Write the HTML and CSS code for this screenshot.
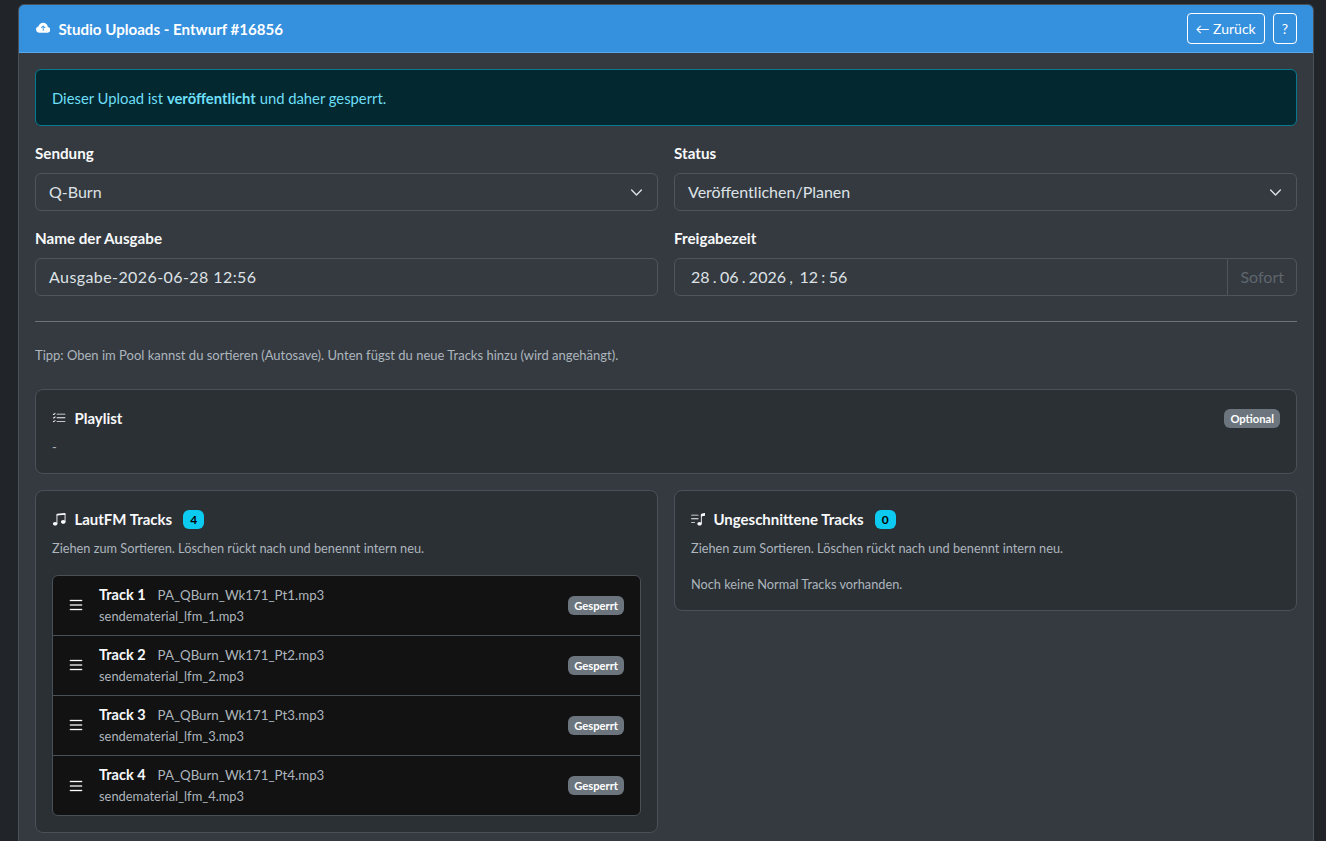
FILE: index.html
```html
<!DOCTYPE html>
<html lang="de">

<head>
  <title>Studio Uploads</title>
  <link rel="stylesheet" href="styles.css">
</head>

<body>
  <div class="main-card">
    <div class="main-header">
      <div class="main-title">
        <svg class="icon" viewBox="0 0 16 16"><path d="M8 2a5.53 5.53 0 0 0-3.594 1.342c-.766.66-1.321 1.52-1.464 2.383C1.266 6.095 0 7.555 0 9.318 0 11.366 1.708 13 3.781 13h8.906C14.502 13 16 11.57 16 9.773c0-1.636-1.242-2.969-2.834-3.194C12.923 3.999 10.69 2 8 2zm2.354 5.146a.5.5 0 0 1-.708.708L8.5 6.707V10.5a.5.5 0 0 1-1 0V6.707L6.354 7.854a.5.5 0 1 1-.708-.708l2-2a.5.5 0 0 1 .708 0l2 2z"/></svg>
        <span>Studio Uploads - Entwurf #16856</span>
      </div>
      <div class="header-btns">
        <a class="btn-outline" href="#">← Zurück</a>
        <a class="btn-outline" href="#">?</a>
      </div>
    </div>

    <div class="main-body">
      <div class="alert"><span>Dieser Upload ist <b>veröffentlicht</b> und daher gesperrt.</span></div>

      <div class="form-grid">
        <div class="field">
          <label>Sendung</label>
          <div class="control select">
            <span>Q-Burn</span>
            <svg class="chevron" viewBox="0 0 16 16"><path fill="none" stroke="currentColor" stroke-linecap="round" stroke-linejoin="round" stroke-width="1.7" d="m2 5 6 6 6-6"/></svg>
          </div>
        </div>
        <div class="field">
          <label>Status</label>
          <div class="control select">
            <span>Veröffentlichen/Planen</span>
            <svg class="chevron" viewBox="0 0 16 16"><path fill="none" stroke="currentColor" stroke-linecap="round" stroke-linejoin="round" stroke-width="1.7" d="m2 5 6 6 6-6"/></svg>
          </div>
        </div>
        <div class="field">
          <label>Name der Ausgabe</label>
          <div class="control wide">Ausgabe-2026-06-28 12:56</div>
        </div>
        <div class="field">
          <label>Freigabezeit</label>
          <div class="input-group">
            <div class="control date">28 . 06 . 2026 , &nbsp;12 : 56</div>
            <div class="addon">Sofort</div>
          </div>
        </div>
      </div>

      <hr class="divider">

      <p class="tip">Tipp: Oben im Pool kannst du sortieren (Autosave). Unten fügst du neue Tracks hinzu (wird angehängt).</p>

      <div class="panel playlist">
        <div class="panel-head">
          <div class="panel-title">
            <svg class="icon" viewBox="0 0 16 16"><path d="M5 11.5a.5.5 0 0 1 .5-.5h9a.5.5 0 0 1 0 1h-9a.5.5 0 0 1-.5-.5zm0-4a.5.5 0 0 1 .5-.5h9a.5.5 0 0 1 0 1h-9a.5.5 0 0 1-.5-.5zm0-4a.5.5 0 0 1 .5-.5h9a.5.5 0 0 1 0 1h-9a.5.5 0 0 1-.5-.5zM3.854 2.146a.5.5 0 0 1 0 .708l-1.5 1.5a.5.5 0 0 1-.708 0l-.5-.5a.5.5 0 1 1 .708-.708L2 3.293l1.146-1.147a.5.5 0 0 1 .708 0zm0 4a.5.5 0 0 1 0 .708l-1.5 1.5a.5.5 0 0 1-.708 0l-.5-.5a.5.5 0 1 1 .708-.708L2 7.293l1.146-1.147a.5.5 0 0 1 .708 0zm0 4a.5.5 0 0 1 0 .708l-1.5 1.5a.5.5 0 0 1-.708 0l-.5-.5a.5.5 0 0 1 .708-.708l.146.147 1.146-1.147a.5.5 0 0 1 .708 0z"/></svg>
            <span>Playlist</span>
          </div>
          <span class="badge grey">Optional</span>
        </div>
        <div class="muted dash">-</div>
      </div>

      <div class="track-grid">
        <div class="panel">
          <div class="panel-title">
            <svg class="icon" viewBox="0 0 16 16"><path d="M6 13c0 1.105-1.12 2-2.5 2S1 14.105 1 13c0-1.104 1.12-2 2.5-2s2.5.896 2.5 2zm9-2c0 1.105-1.12 2-2.5 2s-2.5-.895-2.5-2 1.12-2 2.5-2 2.5.895 2.5 2z"/><path d="M14 11V2h1v9h-1zM6 3v10H5V3h1z"/><path d="M5 2.905a1 1 0 0 1 .9-.995l8-.8a1 1 0 0 1 1.1.995V3L5 4V2.905z"/></svg>
            <span>LautFM Tracks</span>
            <span class="badge cyan">4</span>
          </div>
          <div class="muted hint">Ziehen zum Sortieren. Löschen rückt nach und benennt intern neu.</div>

          <div class="track-list">
            <div class="track">
              <svg class="handle" viewBox="0 0 16 16"><path d="M2.5 12a.5.5 0 0 1 .5-.5h10a.5.5 0 0 1 0 1H3a.5.5 0 0 1-.5-.5zm0-4a.5.5 0 0 1 .5-.5h10a.5.5 0 0 1 0 1H3a.5.5 0 0 1-.5-.5zm0-4a.5.5 0 0 1 .5-.5h10a.5.5 0 0 1 0 1H3a.5.5 0 0 1-.5-.5z"/></svg>
              <div class="track-text">
                <div class="track-line"><b>Track 1</b><span>PA_QBurn_Wk171_Pt1.mp3</span></div>
                <div class="track-file">sendematerial_lfm_1.mp3</div>
              </div>
              <span class="badge grey">Gesperrt</span>
            </div>
            <div class="track">
              <svg class="handle" viewBox="0 0 16 16"><path d="M2.5 12a.5.5 0 0 1 .5-.5h10a.5.5 0 0 1 0 1H3a.5.5 0 0 1-.5-.5zm0-4a.5.5 0 0 1 .5-.5h10a.5.5 0 0 1 0 1H3a.5.5 0 0 1-.5-.5zm0-4a.5.5 0 0 1 .5-.5h10a.5.5 0 0 1 0 1H3a.5.5 0 0 1-.5-.5z"/></svg>
              <div class="track-text">
                <div class="track-line"><b>Track 2</b><span>PA_QBurn_Wk171_Pt2.mp3</span></div>
                <div class="track-file">sendematerial_lfm_2.mp3</div>
              </div>
              <span class="badge grey">Gesperrt</span>
            </div>
            <div class="track">
              <svg class="handle" viewBox="0 0 16 16"><path d="M2.5 12a.5.5 0 0 1 .5-.5h10a.5.5 0 0 1 0 1H3a.5.5 0 0 1-.5-.5zm0-4a.5.5 0 0 1 .5-.5h10a.5.5 0 0 1 0 1H3a.5.5 0 0 1-.5-.5zm0-4a.5.5 0 0 1 .5-.5h10a.5.5 0 0 1 0 1H3a.5.5 0 0 1-.5-.5z"/></svg>
              <div class="track-text">
                <div class="track-line"><b>Track 3</b><span>PA_QBurn_Wk171_Pt3.mp3</span></div>
                <div class="track-file">sendematerial_lfm_3.mp3</div>
              </div>
              <span class="badge grey">Gesperrt</span>
            </div>
            <div class="track">
              <svg class="handle" viewBox="0 0 16 16"><path d="M2.5 12a.5.5 0 0 1 .5-.5h10a.5.5 0 0 1 0 1H3a.5.5 0 0 1-.5-.5zm0-4a.5.5 0 0 1 .5-.5h10a.5.5 0 0 1 0 1H3a.5.5 0 0 1-.5-.5zm0-4a.5.5 0 0 1 .5-.5h10a.5.5 0 0 1 0 1H3a.5.5 0 0 1-.5-.5z"/></svg>
              <div class="track-text">
                <div class="track-line"><b>Track 4</b><span>PA_QBurn_Wk171_Pt4.mp3</span></div>
                <div class="track-file">sendematerial_lfm_4.mp3</div>
              </div>
              <span class="badge grey">Gesperrt</span>
            </div>
          </div>
        </div>

        <div class="panel side">
          <div class="panel-title">
            <svg class="icon" viewBox="0 0 16 16"><path d="M12 13c0 1.105-1.12 2-2.5 2S7 14.105 7 13s1.12-2 2.5-2 2.5.895 2.5 2z"/><path d="M12 3v10h-1V3h1z"/><path d="M11 2.82a1 1 0 0 1 .804-.98l3-.6A1 1 0 0 1 16 2.22V4l-5 1V2.82z"/><path d="M0 11.5a.5.5 0 0 1 .5-.5H4a.5.5 0 0 1 0 1H.5a.5.5 0 0 1-.5-.5zm0-4A.5.5 0 0 1 .5 7H8a.5.5 0 0 1 0 1H.5a.5.5 0 0 1-.5-.5zm0-4A.5.5 0 0 1 .5 3H8a.5.5 0 0 1 0 1H.5a.5.5 0 0 1-.5-.5z"/></svg>
            <span>Ungeschnittene Tracks</span>
            <span class="badge cyan">0</span>
          </div>
          <div class="muted hint">Ziehen zum Sortieren. Löschen rückt nach und benennt intern neu.</div>
          <div class="muted empty">Noch keine Normal Tracks vorhanden.</div>
        </div>
      </div>
    </div>
  </div>
</body>

</html>
```

FILE: styles.css
```css
html,
body {
  height: 841px;
  overflow: hidden;
}

body {
  margin: 0;
  padding: 4px 12px 0 18px;
  background-color: #212529;
  color: #dee2e6;
  font-family: "Lato", "Liberation Sans", sans-serif;
  font-size: 14px;
}

.main-card {
  background-color: #343a40;
  border: 1px solid #495057;
  border-radius: 6px;
  overflow: hidden;
}

.main-header {
  display: flex;
  align-items: center;
  justify-content: space-between;
  height: 48px;
  padding: 0 16px 0 17px;
  background-color: #3590de;
  border-bottom: 1px solid #5aa9ea;
  box-sizing: border-box;
  color: #fff;
}

.main-title {
  display: flex;
  align-items: center;
  gap: 8px;
  font-size: 15.1px;
  font-weight: 700;
}

.icon {
  width: 14.4px;
  height: 14.4px;
  fill: currentColor;
  flex: none;
}

.header-btns {
  display: flex;
  gap: 8px;
}

.btn-outline {
  display: block;
  padding: 5px 8px;
  border: 1px solid #fff;
  border-radius: 4px;
  color: #fff;
  font-size: 14px;
  line-height: 19px;
  text-decoration: none;
}

.main-body {
  padding: 16px;
}

.alert {
  height: 57px;
  box-sizing: border-box;
  padding: 0 16px;
  display: flex;
  align-items: center;
  background-color: #032830;
  border: 1px solid #087990;
  border-radius: 6px;
  color: #6edff6;
  font-size: 14.8px;
}

.form-grid {
  display: grid;
  grid-template-columns: 1fr 1fr;
  gap: 17px 16px;
  margin-top: 17px;
}

.field label {
  display: block;
  margin-bottom: 10px;
  color: #f8f9fa;
  font-size: 15.2px;
  font-weight: 700;
  line-height: 20px;
}

.control {
  display: flex;
  align-items: center;
  justify-content: space-between;
  height: 38px;
  box-sizing: border-box;
  padding: 0 13px 2px;
  border: 1px solid #4f555c;
  border-radius: 6px;
  color: #dee2e6;
  font-size: 16px;
}

.chevron {
  width: 13px;
  height: 13px;
  margin: 2px 1px 0 0;
}

.wide {
  letter-spacing: 0.42px;
}

.input-group {
  display: flex;
}

.date {
  flex: 1;
  justify-content: flex-start;
  padding-left: 16px;
  border-radius: 6px 0 0 6px;
  white-space: pre;
  word-spacing: -0.8px;
}

.addon {
  display: flex;
  align-items: center;
  padding: 0 12px 2px;
  border: 1px solid #4f555c;
  border-left: none;
  border-radius: 0 6px 6px 0;
  background-color: #343a40;
  color: #5f666d;
  font-size: 16px;
}

.divider {
  margin: 25px 0 0;
  border: none;
  border-top: 1px solid #6d7277;
}

.tip {
  margin: 25px 0 0;
  color: #adb5bd;
  font-size: 13px;
  line-height: 17px;
}

.panel {
  padding: 16px;
  background-color: #2b3035;
  border: 1px solid #495057;
  border-radius: 8px;
}

.playlist {
  margin-top: 25px;
  height: 85px;
  box-sizing: border-box;
}

.panel-head {
  display: flex;
  align-items: center;
  justify-content: space-between;
}

.panel-title {
  display: flex;
  align-items: center;
  gap: 8px;
  height: 24px;
  color: #f8f9fa;
  font-size: 15px;
  font-weight: 700;
}

.panel-title .badge {
  margin-left: 3px;
}

.badge {
  padding: 3px 6px;
  border-radius: 6px;
  font-size: 11.2px;
  font-weight: 700;
  line-height: 13px;
}

.badge.grey {
  background-color: #6c757d;
  color: #fff;
}

.badge.cyan {
  padding: 3px 7px;
  background-color: #0dcaf0;
  color: #000;
  font-size: 12px;
}

.muted {
  color: #adb5bd;
  font-size: 12.75px;
  line-height: 18px;
}

.dash {
  margin-top: 8px;
}

.track-grid {
  display: grid;
  grid-template-columns: 1fr 1fr;
  gap: 16px;
  align-items: start;
  margin-top: 16px;
}

.hint {
  margin-top: 8px;
}

.empty {
  margin-top: 18px;
}

.side {
  padding-bottom: 17px;
}

.track-list {
  margin-top: 18px;
  background-color: #121212;
  border: 1px solid #495057;
  border-radius: 6px;
}

.track {
  display: flex;
  align-items: center;
  height: 60px;
  box-sizing: border-box;
  padding: 0 16px 1px;
  border-bottom: 1px solid #495057;
}

.track:last-child {
  height: 59px;
  padding-bottom: 0;
  border-bottom: none;
}

.handle {
  width: 18px;
  height: 18px;
  margin-left: -2px;
  fill: #fff;
  stroke: #fff;
  stroke-width: 0.25;
  flex: none;
}

.track-text {
  flex: 1;
  margin: -1px 0 0 14px;
}

.track-line {
  display: flex;
  gap: 12px;
  color: #adb5bd;
  font-size: 13.3px;
  line-height: 20px;
}

.track-line b {
  color: #f8f9fa;
  font-size: 14.5px;
}

.track-file {
  margin-top: 2px;
  color: #adb5bd;
  font-size: 12.9px;
  line-height: 18px;
}
```
